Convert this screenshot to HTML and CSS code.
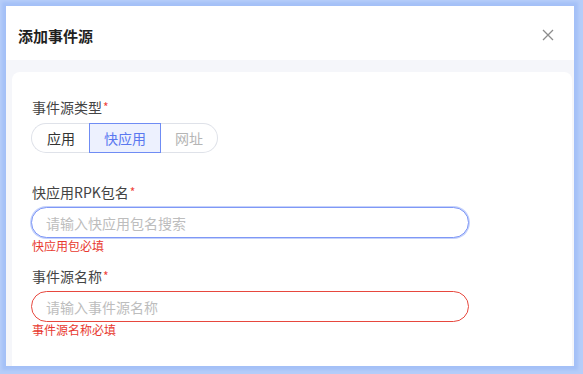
FILE: index.html
```html
<!DOCTYPE html>
<html lang="zh-CN">
<head>
  <meta charset="UTF-8">
  <meta name="viewport" content="width=device-width, initial-scale=1.0">
  <title>添加事件源</title>
  <link rel="stylesheet" href="styles.css">
</head>
<body>
  <div class="dialog">
    <div class="dialog-header">
      <span class="dialog-title">添加事件源</span>
      <button class="dialog-close" aria-label="关闭">
        <svg width="12" height="12" viewBox="0 0 12 12">
          <path d="M1 1L11 11M11 1L1 11" stroke="#8c8c8c" stroke-width="1.3" fill="none"/>
        </svg>
      </button>
    </div>
    <div class="dialog-body">
      <div class="card">
        <div class="form-item">
          <div class="form-label">事件源类型<i>*</i></div>
          <div class="seg">
            <span class="seg-item">应用</span>
            <span class="seg-item active">快应用</span>
            <span class="seg-item disabled">网址</span>
          </div>
        </div>
        <div class="form-item">
          <div class="form-label">快应用RPK包名<i>*</i></div>
          <input class="input focus" placeholder="请输入快应用包名搜索">
          <div class="form-error">快应用包必填</div>
        </div>
        <div class="form-item">
          <div class="form-label">事件源名称<i>*</i></div>
          <input class="input error" placeholder="请输入事件源名称">
          <div class="form-error">事件源名称必填</div>
        </div>
      </div>
    </div>
  </div>
</body>
</html>
```

FILE: styles.css
```css
* {
  box-sizing: border-box;
}
html, body {
  margin: 0;
  height: 100%;
}
body {
  background: #b6cdf9;
  font-family: "Noto Sans CJK SC", "Liberation Sans", sans-serif;
  padding: 6px 9px 8px 6px;
  overflow: hidden;
}
.dialog {
  display: flex;
  flex-direction: column;
  height: 360px;
  background: #fff;
  overflow: hidden;
  box-shadow: 0 0 3px 4px #a4c0f7;
}
.dialog-header {
  display: flex;
  align-items: center;
  justify-content: space-between;
  height: 54px;
  padding: 4px 20px 0 12px;
  flex-shrink: 0;
}
.dialog-title {
  font-size: 15px;
  font-weight: bold;
  color: #1f1f1f;
}
.dialog-close {
  display: flex;
  padding: 0;
  border: none;
  background: none;
  cursor: pointer;
}
.dialog-body {
  flex: 1;
  background: #f5f6fa;
  padding: 12px 2px 0 6px;
  display: flex;
}
.card {
  flex: 1;
  background: #fff;
  border-radius: 8px 8px 0 0;
  padding: 24px 19px 0;
}
.form-item + .form-item {
  margin-top: 28px;
}
.form-item + .form-item + .form-item {
  margin-top: 11px;
}
.form-label {
  font-size: 14px;
  line-height: 22px;
  color: #444;
  margin-bottom: 4px;
  padding-left: 1px;
}
.form-item:first-child .form-label {
  margin-bottom: 5px;
}
.form-label i {
  font-style: normal;
  color: #f0443a;
  font-size: 12px;
  vertical-align: top;
  margin-left: 1px;
}
.seg {
  display: inline-flex;
}
.seg-item {
  height: 30px;
  line-height: 28px;
  padding: 0 14px;
  font-size: 14px;
  color: #333;
  border-top: 1px solid #dfe2e9;
  border-bottom: 1px solid #dfe2e9;
}
.seg-item:first-child {
  padding-left: 15px;
  border-left: 1px solid #dfe2e9;
  border-radius: 15px 0 0 15px;
}
.seg-item:last-child {
  border-right: 1px solid #dfe2e9;
  border-radius: 0 15px 15px 0;
}
.seg-item.active {
  padding: 0 14px;
  border: 1px solid #6f8cf4;
  background: #edf1fe;
  color: #5a78f0;
}
.seg-item.disabled {
  color: #b5b5b5;
}
.input {
  display: block;
  width: 438px;
  height: 31px;
  padding: 0 14px;
  border-radius: 16px;
  border: 1px solid #dcdfe6;
  font-family: inherit;
  font-size: 14px;
  outline: none;
}
.input::placeholder {
  color: #bdbdbd;
}
.input.focus {
  border-color: #7f98f6;
  box-shadow: 0 0 0 1px #c5d2fb;
}
.input.error {
  border-color: #e7483e;
}
.form-error {
  font-size: 12px;
  line-height: 16px;
  color: #e8392f;
  padding-left: 1px;
}
```
